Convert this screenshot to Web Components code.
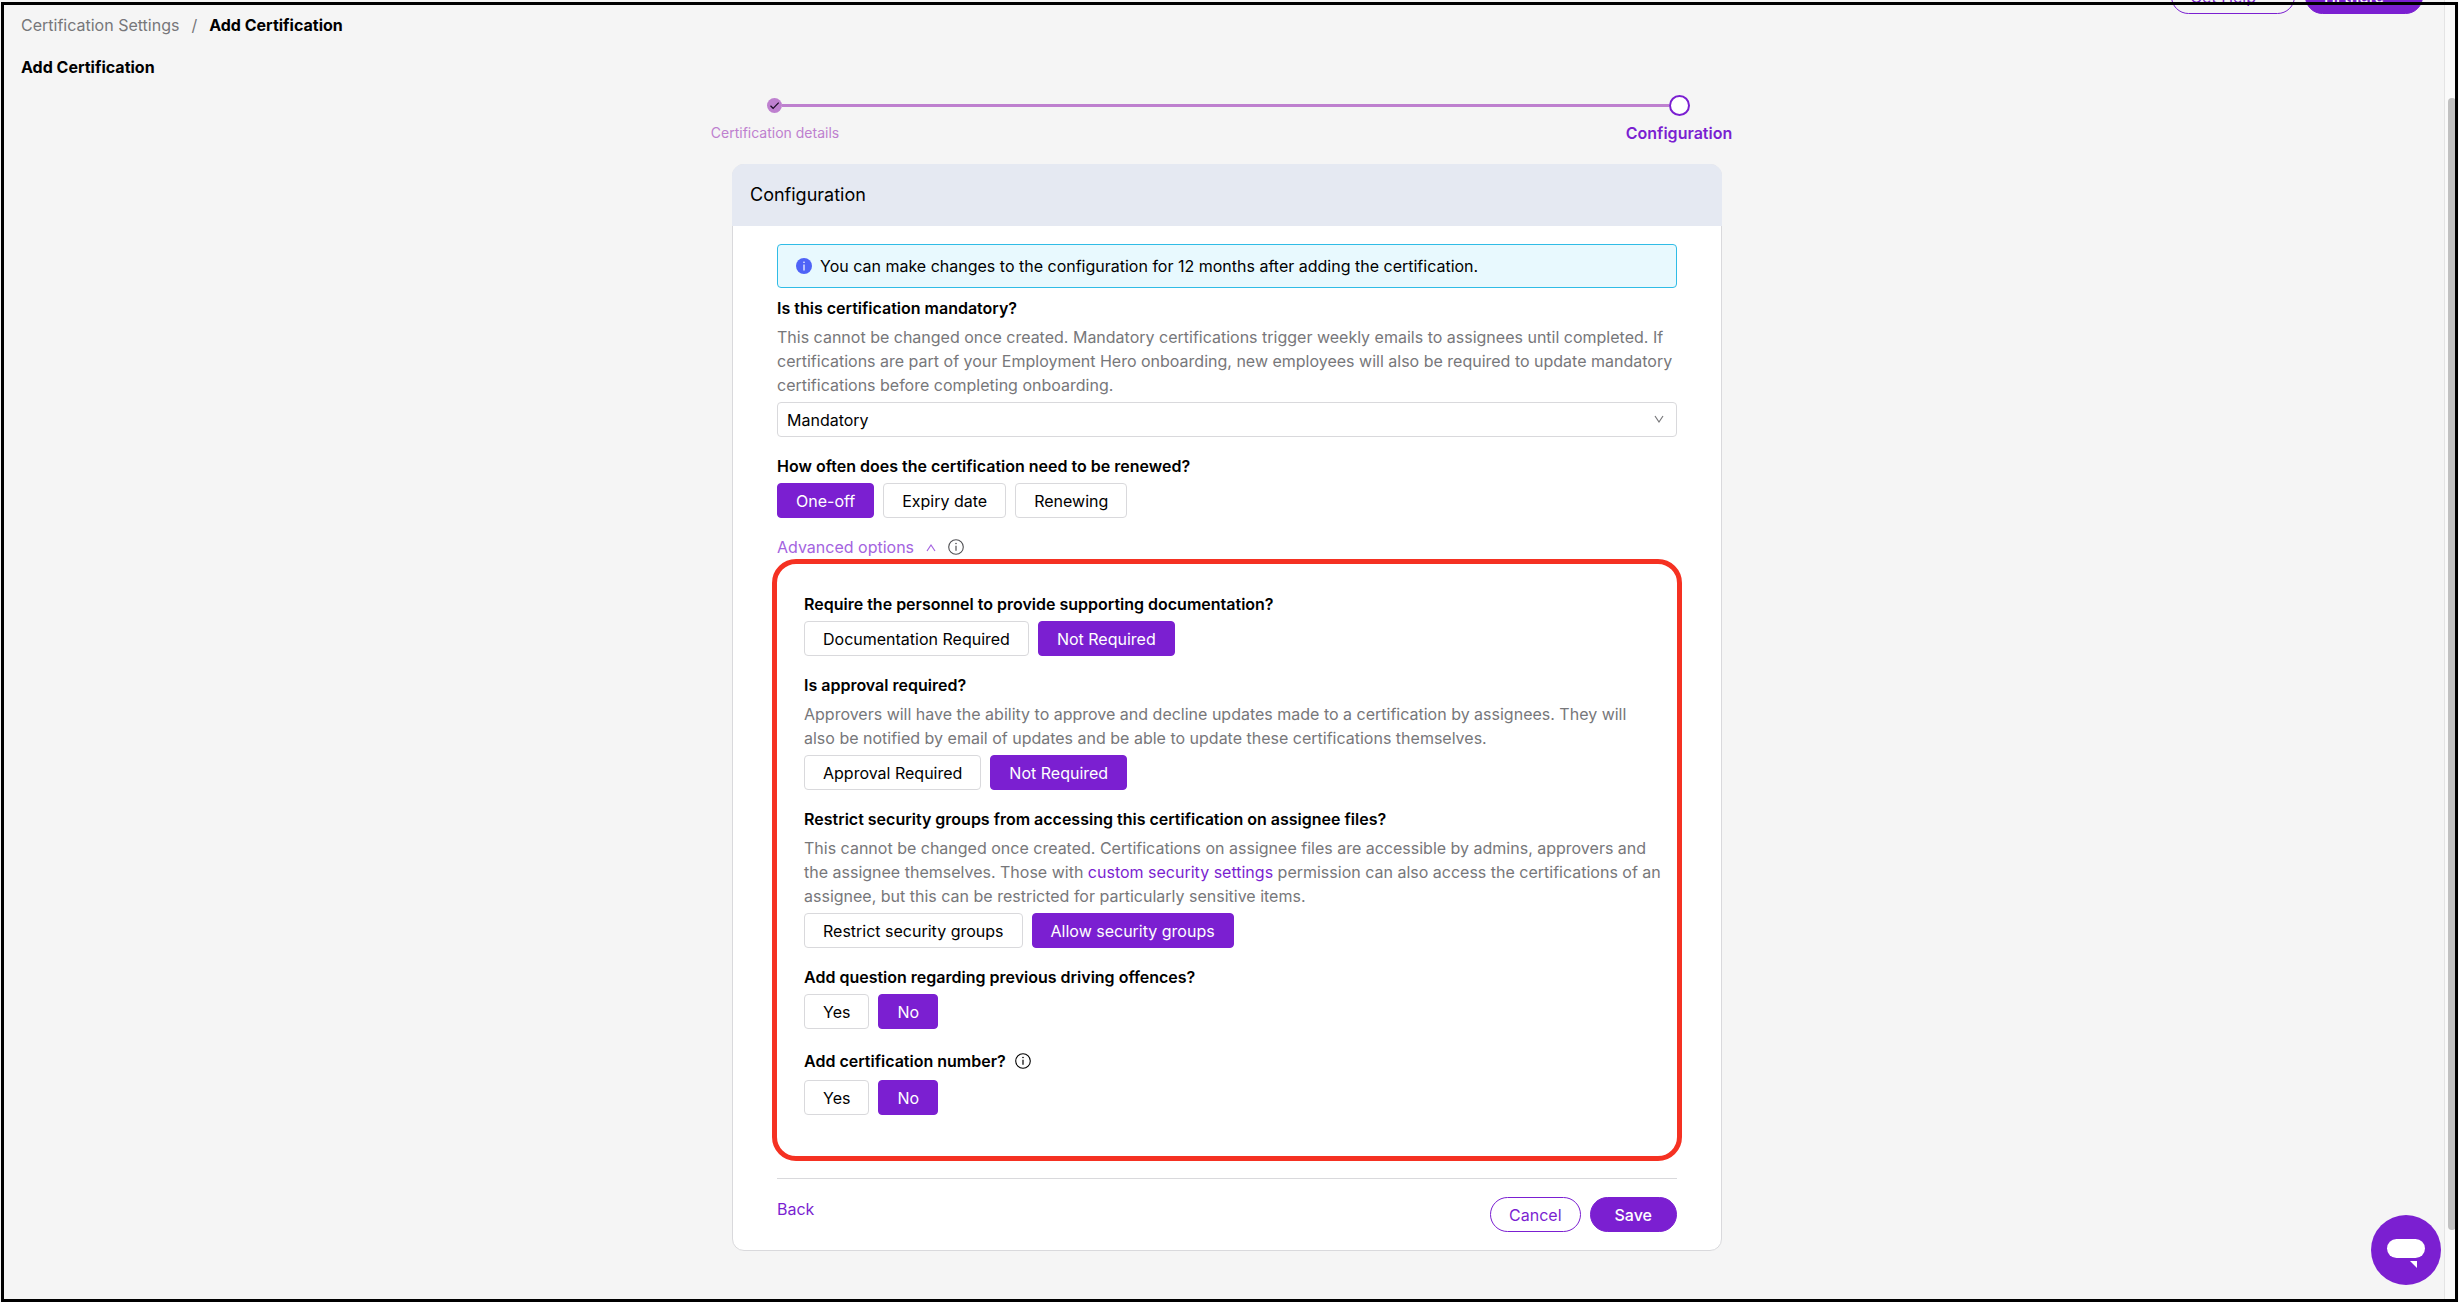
<!DOCTYPE html>
<html lang="en">
<head>
<meta charset="utf-8">
<title>Add Certification</title>
<style>
  body {
    margin: 0;
    background: #f5f5f5;
    color: #000;
    font: 16px/24px Inter, "Open Sans", sans-serif;
    --purple: #7b1fd1;
    --purple-light: #be80cf;
    --line: #d9d9dc;
  }
</style>
</head>
<body>
<certification-page></certification-page>

<script>
function generateTemplate(html) {
    const template = document.createElement('template');
    template.innerHTML = html;
    return template;
}

const INFO_ICON = `
    <svg width="16" height="16" viewBox="0 0 16 16" fill="none" stroke="currentColor" role="img" aria-label="Info">
      <circle cx="8" cy="8" r="7.3" stroke-width="1.1"/>
      <path d="M8 6.7v5" stroke-width="1.2"/>
      <circle cx="8" cy="4.5" r=".8" fill="currentColor" stroke="none"/>
    </svg>
`;

class BaseElement extends HTMLElement {

    constructor() {
      super();
      const shadowRoot = this.attachShadow({ mode: 'open' });
      shadowRoot.appendChild(this.constructor.template.content.cloneNode(true));
    }

}

/* pill shaped action button: outlined, or filled with the primary attribute */
class PillButton extends BaseElement {

    static template = generateTemplate(`
        <style>
          :host {
            display: inline-flex;
          }
          button {
            display: flex;
            align-items: center;
            justify-content: center;
            gap: 8px;
            height: 35px;
            padding: 0 18px;
            border: 1px solid var(--purple);
            border-radius: 18px;
            background: transparent;
            color: var(--purple);
            font: inherit;
            cursor: pointer;
          }
          :host([primary]) button {
            background: var(--purple);
            color: #fff;
            font-weight: 500;
          }
          :host([wide]) button {
            padding: 0 24px;
          }
        </style>
        <button type="button"><slot></slot></button>
    `);

}

class TopActions extends BaseElement {

    static template = generateTemplate(`
        <style>
          :host {
            display: flex;
            justify-content: flex-end;
            gap: 10px;
            margin-top: -21px;
            padding-right: 10px;
          }
        </style>
        <pill-button>Get Help
          <svg width="12" height="8" viewBox="0 0 12 8" fill="none" stroke="currentColor"><path d="M2 1l4 5 4-5"/></svg>
        </pill-button>
        <pill-button primary>Hi there
          <svg width="12" height="8" viewBox="0 0 12 8" fill="none" stroke="currentColor"><path d="M2 1l4 5 4-5"/></svg>
        </pill-button>
    `);

}

class BreadCrumb extends BaseElement {

    static template = generateTemplate(`
        <style>
          :host {
            display: block;
          }
          nav {
            display: flex;
            gap: 12px;
            line-height: 22px;
            color: #77777a;
          }
          a {
            color: inherit;
            text-decoration: none;
          }
          b {
            color: #000;
          }
        </style>
        <nav aria-label="Breadcrumb"><a href="#settings">Certification Settings</a><span>/</span><b>Add Certification</b></nav>
    `);

}

class StepProgress extends BaseElement {

    static template = generateTemplate(`
        <style>
          :host {
            display: block;
            width: 100%;
            max-width: 1034px;
          }
          .track {
            display: flex;
            align-items: center;
            padding: 0 54px 0 57px;
          }
          .line {
            flex: 1;
            height: 3px;
            background: var(--purple-light);
          }
          .current {
            box-sizing: border-box;
            width: 21px;
            height: 21px;
            border: 2px solid var(--purple);
            border-radius: 50%;
            background: #fff;
          }
          .labels {
            display: flex;
            justify-content: space-between;
            margin-top: 5px;
          }
          .labels span {
            width: 130px;
            text-align: center;
            white-space: nowrap;
          }
          .done {
            color: var(--purple-light);
            font-size: 14px;
          }
          .now {
            color: var(--purple);
            font-weight: 600;
          }
        </style>
        <div class="track">
          <svg width="15" height="15" viewBox="0 0 15 15">
            <circle cx="7.5" cy="7.5" r="7.5" fill="#be80cf"/>
            <path d="M3.5 7.8l2.6 2.5 5.6-5.6" fill="none" stroke="#1a0a24" stroke-width="1.2"/>
          </svg>
          <div class="line"></div>
          <div class="current"></div>
        </div>
        <div class="labels">
          <span class="done">Certification details</span>
          <span class="now">Configuration</span>
        </div>
    `);

}

class InfoAlert extends BaseElement {

    static template = generateTemplate(`
        <style>
          :host {
            display: flex;
            align-items: center;
            gap: 8px;
            padding: 9px 18px;
            border: 1px solid #30bce6;
            border-radius: 4px;
            background: #e8f9fe;
          }
          svg {
            flex: none;
          }
        </style>
        <svg width="16" height="16" viewBox="0 0 16 16">
          <circle cx="8" cy="8" r="8" fill="#4f63f7"/>
          <path d="M8 6.5v6" stroke="#fff" stroke-width="1.2"/>
          <circle cx="8" cy="4.3" r=".8" fill="#fff"/>
        </svg>
        <slot></slot>
    `);

}

/* bold question, optional hint text, then the control in the default slot */
class FormQuestion extends BaseElement {

    static template = generateTemplate(`
        <style>
          :host {
            display: block;
          }
          div {
            display: flex;
            flex-direction: column;
            gap: 5px;
          }
          ::slotted([slot=label]) {
            display: flex;
            align-items: center;
            gap: 9px;
            font-weight: 600;
          }
          ::slotted([slot=hint]) {
            margin: 0;
            color: #77777a;
          }
        </style>
        <div>
          <slot name="label"></slot>
          <slot name="hint"></slot>
          <slot></slot>
        </div>
    `);

}

class OptionSelect extends BaseElement {

    static template = generateTemplate(`
        <style>
          :host {
            display: block;
            position: relative;
          }
          select {
            display: block;
            appearance: none;
            width: 100%;
            height: 35px;
            padding: 0 40px 0 9px;
            border: 1px solid var(--line);
            border-radius: 4px;
            background: #fff;
            color: inherit;
            font: inherit;
          }
          svg {
            position: absolute;
            right: 13px;
            top: 13px;
            pointer-events: none;
          }
        </style>
        <select>
          <option>Mandatory</option>
          <option>Optional</option>
        </select>
        <svg width="10" height="9" viewBox="0 0 10 9" fill="none" stroke="#77777a" stroke-width="1.2"><path d="M1 1l4 6 4-6"/></svg>
    `);

    connectedCallback() {
      this.shadowRoot.querySelector('select').setAttribute('aria-label', this.getAttribute('label'))
    }

}

/* <choice-group options="Yes|No" value="No"> */
class ChoiceGroup extends BaseElement {

    static template = generateTemplate(`
        <style>
          :host {
            display: flex;
            gap: 9px;
          }
          button {
            height: 35px;
            padding: 0 18px;
            border: 1px solid var(--line);
            border-radius: 4px;
            background: #fff;
            color: #000;
            font: inherit;
            cursor: pointer;
          }
          button[aria-pressed=true] {
            border-color: var(--purple);
            background: var(--purple);
            color: #fff;
          }
        </style>
    `);

    constructor() {
      super();
      this.choiceClickedBind = this.choiceClicked.bind(this)
    }

    connectedCallback() {
      this.buttons = this.getAttribute('options').split('|').map(text => {
        const button = document.createElement('button')
        button.type = 'button'
        button.textContent = text
        button.addEventListener('click', this.choiceClickedBind)
        this.shadowRoot.appendChild(button)
        return button
      })
      this.update(this.getAttribute('value'))
    }

    choiceClicked(e) {
      this.update(e.target.textContent)
      this.dispatchEvent(new CustomEvent('choice-change', { detail: e.target.textContent }))
    }

    update(value) {
      this.buttons.forEach(b => b.setAttribute('aria-pressed', b.textContent === value))
    }

}

class AdvancedToggle extends BaseElement {

    static template = generateTemplate(`
        <style>
          :host {
            display: flex;
            align-items: center;
            gap: 12px;
            color: #505054;
          }
          button {
            display: flex;
            align-items: center;
            gap: 12px;
            padding: 0;
            border: 0;
            background: none;
            color: #a463e0;
            font: inherit;
            cursor: pointer;
          }
        </style>
        <button type="button" aria-expanded="true">Advanced options
          <svg width="10" height="9" viewBox="0 0 10 9" fill="none" stroke="currentColor" stroke-width="1.2"><path d="M1 8l4-6 4 6"/></svg>
        </button>
        ${INFO_ICON}
    `);

}

class AdvancedPanel extends BaseElement {

    static template = generateTemplate(`
        <style>
          :host {
            display: flex;
            flex-direction: column;
            gap: 17px;
            margin: 0 -5px;
            padding: 28px 9px 41px 27px;
            border: 5px solid #f53122;
            border-radius: 24px;
          }
        </style>
        <slot></slot>
    `);

}

class FormCard extends BaseElement {

    static template = generateTemplate(`
        <style>
          :host {
            display: block;
            box-sizing: border-box;
            width: 100%;
            max-width: 990px;
            border: 1px solid var(--line);
            border-radius: 12px;
            background: #fff;
          }
          h2 {
            margin: -1px -1px 0;
            padding: 19px 18px;
            border-radius: 12px 12px 0 0;
            background: #e5e9f2;
            font-size: 18px;
            font-weight: 400;
          }
          .body {
            padding: 18px 44px 17px;
          }
          footer {
            display: flex;
            align-items: flex-start;
            gap: 9px;
            margin: 0 44px;
            padding: 18px 0;
            border-top: 1px solid var(--line);
          }
          footer a {
            margin-right: auto;
            color: var(--purple);
            text-decoration: none;
          }
        </style>
        <h2>Configuration</h2>
        <div class="body"><slot></slot></div>
        <footer>
          <a href="#back">Back</a>
          <pill-button>Cancel</pill-button>
          <pill-button primary wide>Save</pill-button>
        </footer>
    `);

}

class ChatButton extends BaseElement {

    static template = generateTemplate(`
        <style>
          :host {
            position: fixed;
            right: 18px;
            bottom: 17px;
          }
          button {
            display: block;
            width: 70px;
            height: 70px;
            padding: 0;
            border: 0;
            border-radius: 50%;
            background: var(--purple);
            cursor: pointer;
          }
          svg {
            display: block;
          }
        </style>
        <button type="button" aria-label="Chat">
          <svg width="70" height="70" viewBox="0 0 70 70" fill="#fff">
            <rect x="16" y="24" width="38" height="19" rx="9.5"/>
            <path d="M39 46h7v7z"/>
          </svg>
        </button>
    `);

}

class ScrollRail extends BaseElement {

    static template = generateTemplate(`
        <style>
          :host {
            display: flex;
            box-sizing: border-box;
            width: 15px;
            padding: 98px 3px 72px;
            border-left: 1px solid #e4e4e4;
            background: #fafafa;
          }
          div {
            flex: 1;
            border-radius: 4px;
            background: #c1c1c1;
          }
        </style>
        <div></div>
    `);

}

class CertificationPage extends BaseElement {

    static template = generateTemplate(`
        <style>
          :host {
            display: flex;
            min-height: 100vh;
            overflow: hidden;
          }
          /* black outline round the whole window */
          :host::after {
            content: "";
            position: fixed;
            inset: 2px 1px 0;
            border: 3px solid #000;
            pointer-events: none;
          }
          main {
            flex: 1;
            padding: 0 11px 51px 21px;
          }
          h1 {
            margin: 19px 0 16px;
            font-size: 16px;
            line-height: 24px;
          }
          .form {
            display: flex;
            flex-direction: column;
            align-items: center;
            gap: 19px;
          }
          .fields {
            display: flex;
            flex-direction: column;
            gap: 17px;
          }
          .intro {
            display: flex;
            flex-direction: column;
            gap: 8px;
          }
          .tall {
            height: 29px;
          }
          a {
            color: var(--purple);
            text-decoration: none;
          }
        </style>
        <main>
          <top-actions></top-actions>
          <bread-crumb></bread-crumb>
          <h1>Add Certification</h1>
          <div class="form">
            <step-progress></step-progress>
            <form-card>
              <div class="fields">
                <div class="intro">
                  <info-alert>You can make changes to the configuration for 12 months after adding the certification.</info-alert>
                  <form-question>
                    <span slot="label">Is this certification mandatory?</span>
                    <p slot="hint">This cannot be changed once created. Mandatory certifications trigger weekly emails to assignees until completed. If certifications are part of your Employment Hero onboarding, new employees will also be required to update mandatory certifications before completing onboarding.</p>
                    <option-select label="Is this certification mandatory?"></option-select>
                  </form-question>
                </div>
                <form-question>
                  <span slot="label">How often does the certification need to be renewed?</span>
                  <choice-group options="One-off|Expiry date|Renewing" value="One-off"></choice-group>
                </form-question>
                <advanced-toggle></advanced-toggle>
              </div>
              <advanced-panel>
                <form-question>
                  <span slot="label">Require the personnel to provide supporting documentation?</span>
                  <choice-group options="Documentation Required|Not Required" value="Not Required"></choice-group>
                </form-question>
                <form-question>
                  <span slot="label">Is approval required?</span>
                  <p slot="hint">Approvers will have the ability to approve and decline updates made to a certification by assignees. They will also&nbsp;be notified by email of updates and be able to update these certifications themselves.</p>
                  <choice-group options="Approval Required|Not Required" value="Not Required"></choice-group>
                </form-question>
                <form-question>
                  <span slot="label">Restrict security groups from accessing this certification on assignee files?</span>
                  <p slot="hint">This cannot be changed once created. Certifications on assignee files are accessible by admins, approvers and the assignee themselves. Those with <a href="#security">custom security settings</a> permission can also access the certifications of an assignee, but this can be restricted for particularly sensitive items.</p>
                  <choice-group options="Restrict security groups|Allow security groups" value="Allow security groups"></choice-group>
                </form-question>
                <form-question>
                  <span slot="label">Add question regarding previous driving offences?</span>
                  <choice-group options="Yes|No" value="No"></choice-group>
                </form-question>
                <form-question>
                  <span slot="label" class="tall">Add certification number? ${INFO_ICON}</span>
                  <choice-group options="Yes|No" value="No"></choice-group>
                </form-question>
              </advanced-panel>
            </form-card>
          </div>
        </main>
        <scroll-rail></scroll-rail>
        <chat-button></chat-button>
    `);

}

window.customElements.define('pill-button', PillButton)
window.customElements.define('top-actions', TopActions)
window.customElements.define('bread-crumb', BreadCrumb)
window.customElements.define('step-progress', StepProgress)
window.customElements.define('info-alert', InfoAlert)
window.customElements.define('form-question', FormQuestion)
window.customElements.define('option-select', OptionSelect)
window.customElements.define('choice-group', ChoiceGroup)
window.customElements.define('advanced-toggle', AdvancedToggle)
window.customElements.define('advanced-panel', AdvancedPanel)
window.customElements.define('form-card', FormCard)
window.customElements.define('chat-button', ChatButton)
window.customElements.define('scroll-rail', ScrollRail)
window.customElements.define('certification-page', CertificationPage)
</script>
</body>
</html>
